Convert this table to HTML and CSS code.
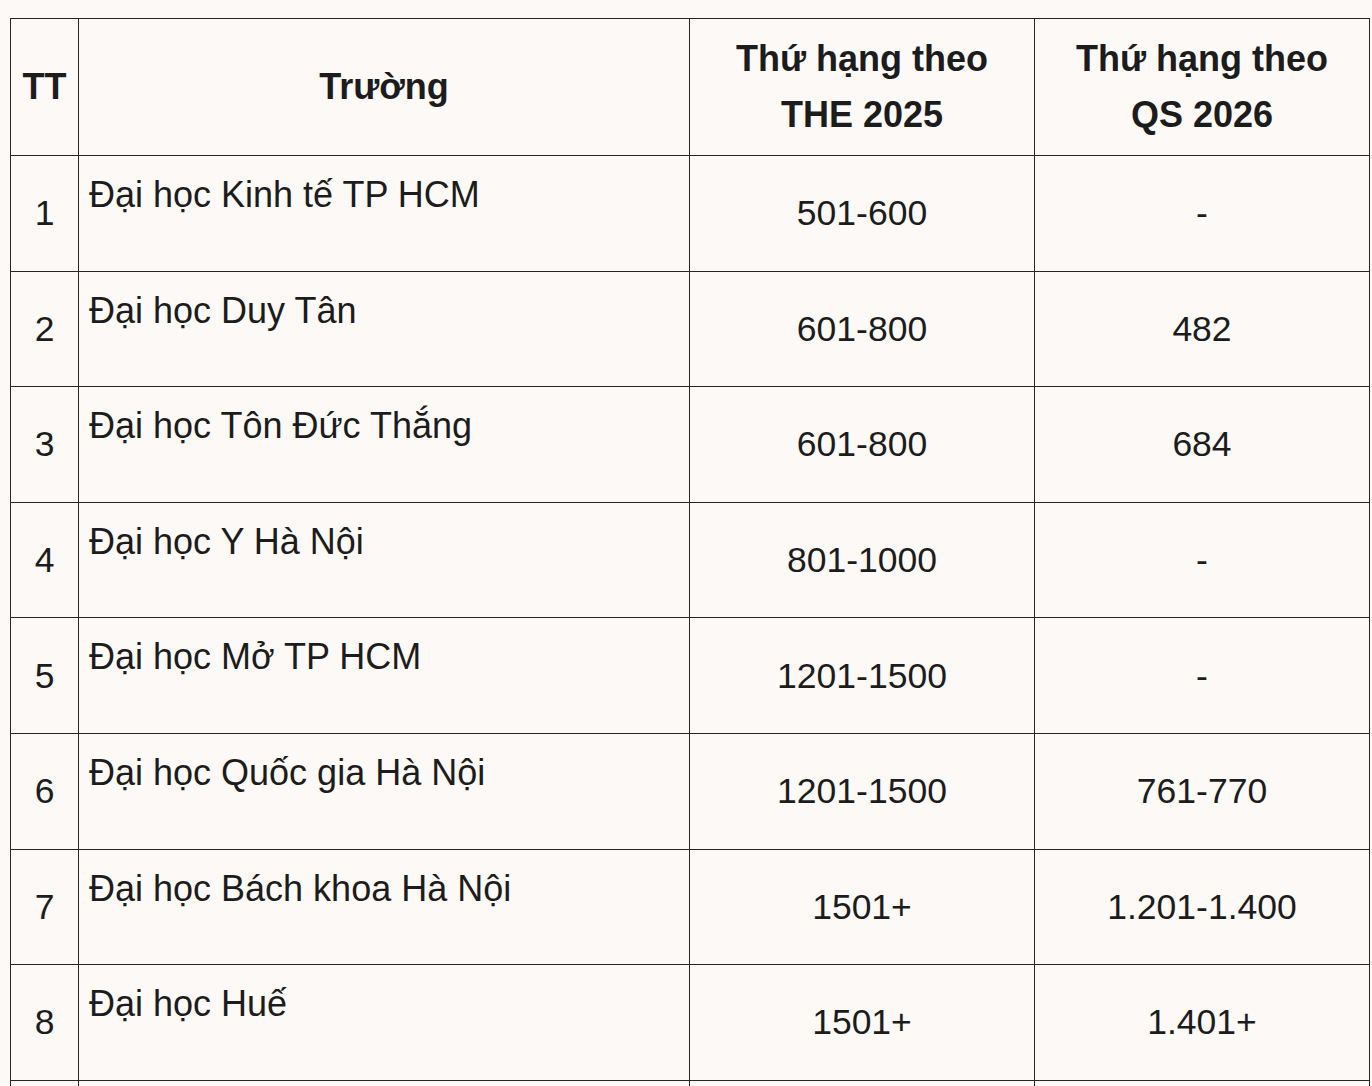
FILE: index.html
```html
<!DOCTYPE html>
<html lang="vi">
<head>
<meta charset="utf-8">
<title>Thứ hạng đại học</title>
<link rel="stylesheet" href="styles.css">
</head>
<body>
<table class="rank">
  <colgroup>
    <col class="c-tt">
    <col class="c-name">
    <col class="c-the">
    <col class="c-qs">
  </colgroup>
  <thead>
    <tr>
      <th>TT</th>
      <th>Trường</th>
      <th>Thứ hạng theo<br>THE 2025</th>
      <th>Thứ hạng theo<br>QS 2026</th>
    </tr>
  </thead>
  <tbody>
    <tr><td class="num">1</td><td class="name">Đại học Kinh tế TP HCM</td><td class="num">501-600</td><td class="num">-</td></tr>
    <tr><td class="num">2</td><td class="name">Đại học Duy Tân</td><td class="num">601-800</td><td class="num">482</td></tr>
    <tr><td class="num">3</td><td class="name">Đại học Tôn Đức Thắng</td><td class="num">601-800</td><td class="num">684</td></tr>
    <tr><td class="num">4</td><td class="name">Đại học Y Hà Nội</td><td class="num">801-1000</td><td class="num">-</td></tr>
    <tr><td class="num">5</td><td class="name">Đại học Mở TP HCM</td><td class="num">1201-1500</td><td class="num">-</td></tr>
    <tr><td class="num">6</td><td class="name">Đại học Quốc gia Hà Nội</td><td class="num">1201-1500</td><td class="num">761-770</td></tr>
    <tr><td class="num">7</td><td class="name">Đại học Bách khoa Hà Nội</td><td class="num">1501+</td><td class="num">1.201-1.400</td></tr>
    <tr><td class="num">8</td><td class="name">Đại học Huế</td><td class="num">1501+</td><td class="num">1.401+</td></tr>
    <tr><td class="num"></td><td class="name"></td><td class="num"></td><td class="num"></td></tr>
  </tbody>
</table>
</body>
</html>
```
FILE: styles.css
```css
html, body {
  margin: 0;
  padding: 0;
  background: #fcf9f6;
}
body {
  padding: 18px 0 0 10px;
  font-family: "Liberation Sans", Arial, Helvetica, sans-serif;
  color: #1c1c1c;
}
.rank {
  border-collapse: collapse;
  table-layout: fixed;
  width: 1359px;
  font-size: 35.5px;
}
.c-tt { width: 68px; }
.c-name { width: 611px; }
.c-the { width: 345px; }
.c-qs { width: 335px; }
.rank th, .rank td {
  border: 1px solid #262626;
  padding: 0;
}
.rank th {
  height: 136px;
  font-weight: bold;
  font-size: 36px;
  line-height: 56px;
  text-align: center;
  vertical-align: middle;
}
.rank tbody tr {
  height: 115.6px;
}
.rank td.num {
  text-align: center;
  vertical-align: middle;
  line-height: 40px;
}
.rank td.name {
  vertical-align: top;
  text-align: left;
  font-size: 36px;
  padding: 19px 10px 0 10px;
  line-height: 40px;
}
```
